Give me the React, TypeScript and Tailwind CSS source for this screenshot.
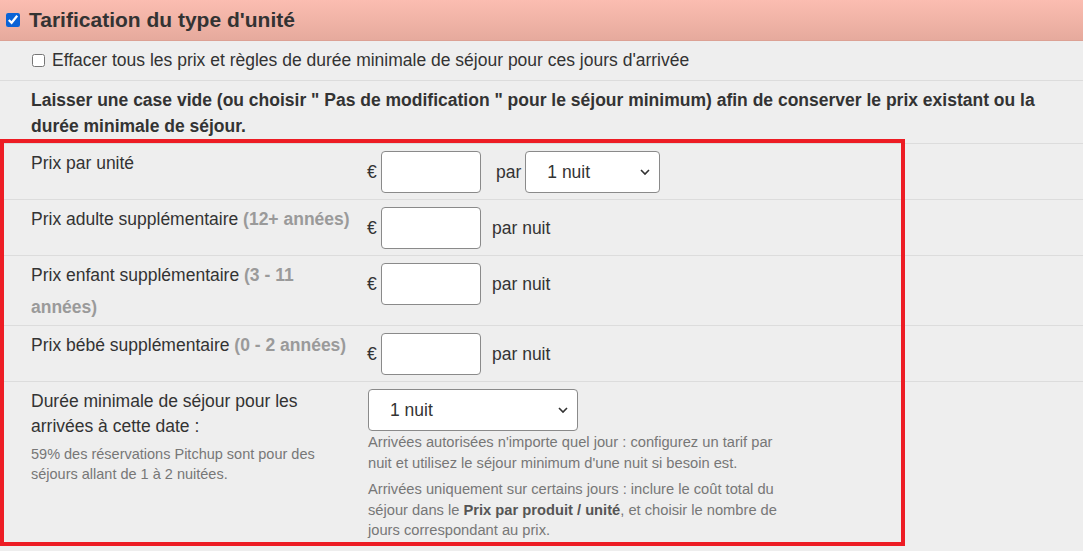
import React from 'react';

const Chevron: React.FC = () => (
  <svg className="pointer-events-none absolute right-[10px] top-1/2 -translate-y-1/2" width="10" height="7" viewBox="0 0 10 7">
    <path d="M1 1.5 L5 5.5 L9 1.5" fill="none" stroke="#333" strokeWidth="1.6" />
  </svg>
);

const Select: React.FC<{ className: string }> = ({ className }) => (
  <div className={`relative ${className}`}>
    <select className="h-full w-full appearance-none rounded-[4px] border border-[#8a8a8a] bg-white pl-[21px] text-[17.5px] text-[#333] outline-none">
      <option>1 nuit</option>
    </select>
    <Chevron />
  </div>
);

const PriceInput: React.FC = () => (
  <div className="flex items-center">
    <span className="w-[14px] text-[17.5px] text-[#333]">€</span>
    <input className="h-[42px] w-[100px] rounded-[4px] border border-[#8a8a8a] bg-white" />
  </div>
);

interface PriceRow {
  label: string;
  ages?: string;
  height: string;
  per?: 'select' | 'nuit';
}

const rows: PriceRow[] = [
  { label: 'Prix par unité', height: 'h-[56px]', per: 'select' },
  { label: 'Prix adulte supplémentaire', ages: '(12+ années)', height: 'h-[56px]', per: 'nuit' },
  { label: 'Prix enfant supplémentaire', ages: '(3 - 11 années)', height: 'h-[70px]', per: 'nuit' },
  { label: 'Prix bébé supplémentaire', ages: '(0 - 2 années)', height: 'h-[56px]', per: 'nuit' },
];

export default function App() {
  return (
    <div className="relative h-[551px] w-[1083px] overflow-hidden bg-[#eeeeee] font-['Liberation_Sans',Arial,sans-serif] text-[#333]">
      {/* Header */}
      <div className="flex h-[41px] items-center gap-[9px] border-b border-[#dca194] bg-gradient-to-b from-[#fbbdb1] to-[#e6aa9d] pl-[6px]">
        <input type="checkbox" defaultChecked className="h-[14px] w-[14px] accent-[#0b63d6]" />
        <h2 className="text-[21px] font-bold text-[#333]">Tarification du type d'unité</h2>
      </div>

      {/* Clear option */}
      <div className="flex h-[40px] items-center gap-[7px] border-b border-[#dcdcdc] pl-[32px] text-[17.5px]">
        <input type="checkbox" className="h-[13px] w-[13px]" />
        <span>Effacer tous les prix et règles de durée minimale de séjour pour ces jours d'arrivée</span>
      </div>

      {/* Notice */}
      <div className="h-[63px] border-b border-[#dcdcdc] pl-[31px] pr-[40px] pt-[6px] text-[17.5px] font-bold leading-[26px]">
        Laisser une case vide (ou choisir " Pas de modification " pour le séjour minimum) afin de conserver le prix existant ou la durée minimale de séjour.
      </div>

      {/* Price rows */}
      {rows.map((row) => (
        <div key={row.label} className={`flex border-b border-[#dcdcdc] ${row.height}`}>
          <div className="w-[356px] shrink-0 pl-[31px] pt-[3px] text-[17.5px] leading-[32px]">
            {row.label}
            {row.ages && <span className="font-bold text-[#9a9a9a]"> {row.ages}</span>}
          </div>
          <div className="flex items-start pl-[11px] pt-[7px]">
            <PriceInput />
            {row.per === 'select' ? (
              <div className="flex h-[42px] items-center">
                <span className="ml-[15px] mr-[4px] text-[17.5px]">par</span>
                <Select className="h-[42px] w-[135px]" />
              </div>
            ) : (
              <span className="ml-[11px] flex h-[42px] items-center text-[17.5px]">par nuit</span>
            )}
          </div>
        </div>
      ))}

      {/* Minimum stay */}
      <div className="flex">
        <div className="w-[356px] shrink-0 pl-[31px] pt-[7px]">
          <div className="text-[17.5px] leading-[25px]">Durée minimale de séjour pour les arrivées à cette date :</div>
          <div className="mt-[5px] pr-[20px] text-[14.5px] leading-[20px] text-[#777]">
            59% des réservations Pitchup sont pour des séjours allant de 1 à 2 nuitées.
          </div>
        </div>
        <div className="w-[427px] pl-[12px] pt-[7px]">
          <Select className="h-[42px] w-[210px]" />
          <p className="mt-[1px] text-[14.7px] leading-[20.5px] text-[#777]">
            Arrivées autorisées n'importe quel jour : configurez un tarif par nuit et utilisez le séjour minimum d'une nuit si besoin est.
          </p>
          <p className="mt-[6px] text-[14.7px] leading-[20.5px] text-[#777]">
            Arrivées uniquement sur certains jours : inclure le coût total du séjour dans le <b className="text-[#555]">Prix par produit / unité</b>, et choisir le nombre de jours correspondant au prix.
          </p>
        </div>
      </div>

      {/* Annotation frame */}
      <div className="pointer-events-none absolute left-0 top-[139px] h-[407px] w-[905px] border-[4px] border-[#ed1c24]" />
    </div>
  );
}
